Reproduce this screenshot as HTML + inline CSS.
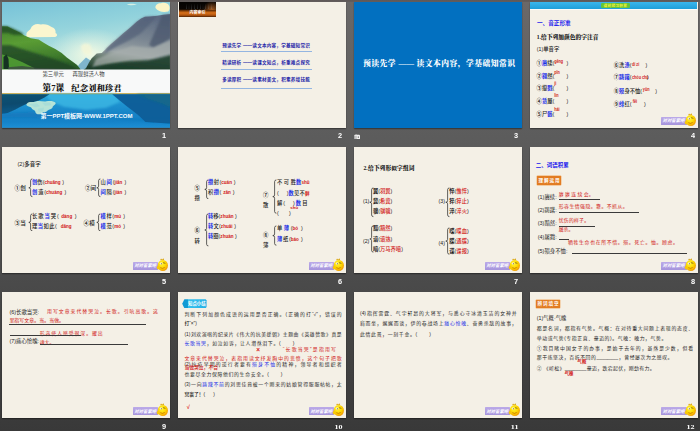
<!DOCTYPE html>
<html lang="zh-CN"><head><meta charset="utf-8"><title>纪念刘和珍君 PPT</title><style>
html,body{margin:0;padding:0;}
body{width:700px;height:431px;overflow:hidden;position:relative;background:linear-gradient(#5f5857 0,#625c5b 1.6px,#6a6868 2.4px,#5c5c5c 32%,#4a4a4a 66%,#393939 100%);font-family:"Liberation Sans","Noto Sans CJK SC",sans-serif;}
.r{position:absolute;}
.t{position:absolute;left:0;top:0;white-space:nowrap;font-family:"Liberation Sans","Noto Sans CJK SC",sans-serif;transform-origin:0 0;}
.t.b{font-weight:bold;}
.t.m{font-weight:500;}
.t.sf{font-family:"Liberation Serif","Noto Serif CJK SC",serif;font-weight:900;}
.t.it{font-style:italic;}
.num{position:absolute;width:400px;text-align:right;color:#fff;font-size:74px;line-height:90px;font-weight:bold;transform-origin:0 0;transform:scale(.1);}
.nb{font-family:"Liberation Sans","Noto Sans CJK SC",sans-serif;}
.ns{font-family:"Liberation Serif","Noto Serif CJK SC",serif;font-size:69px;transform:scale(.116,.1);}
.rd{color:#d01414;}
.bl{color:#1a2ee6;}
svg{position:absolute;overflow:hidden;}
</style></head><body>
<div class="num nb" style="left:126.20px;top:131.05px;">1</div>
<div class="r" style="left:178.0px;top:1.8px;width:168.0px;height:125.8px;background:#f4f0e6;box-shadow:0 0.6px 1.2px rgba(0,0,0,.45);"></div>
<div class="num nb" style="left:302.20px;top:131.05px;">2</div>
<div class="r" style="left:354.0px;top:1.8px;width:168.0px;height:125.8px;background:#0270c0;box-shadow:0 0.6px 1.2px rgba(0,0,0,.45);"></div>
<div class="num nb" style="left:478.20px;top:131.05px;">3</div>
<div class="r" style="left:530.3px;top:1.8px;width:168.0px;height:125.8px;background:#f4f0e6;box-shadow:0 0.6px 1.2px rgba(0,0,0,.45);"></div>
<div class="num nb" style="left:654.50px;top:131.05px;">4</div>
<div class="r" style="left:2.0px;top:147.0px;width:168.0px;height:125.8px;background:#f4f0e6;box-shadow:0 0.6px 1.2px rgba(0,0,0,.45);"></div>
<div class="num nb" style="left:126.20px;top:276.95px;">5</div>
<div class="r" style="left:178.0px;top:147.0px;width:168.0px;height:125.8px;background:#f4f0e6;box-shadow:0 0.6px 1.2px rgba(0,0,0,.45);"></div>
<div class="num nb" style="left:302.20px;top:276.95px;">6</div>
<div class="r" style="left:354.0px;top:147.0px;width:168.0px;height:125.8px;background:#f4f0e6;box-shadow:0 0.6px 1.2px rgba(0,0,0,.45);"></div>
<div class="num nb" style="left:478.20px;top:276.95px;">7</div>
<div class="r" style="left:530.3px;top:147.0px;width:168.0px;height:125.8px;background:#f4f0e6;box-shadow:0 0.6px 1.2px rgba(0,0,0,.45);"></div>
<div class="num nb" style="left:654.50px;top:276.95px;">8</div>
<div class="r" style="left:2.0px;top:291.9px;width:168.0px;height:126.3px;background:#f4f0e6;box-shadow:0 0.6px 1.2px rgba(0,0,0,.45);"></div>
<div class="num nb" style="left:126.20px;top:421.95px;">9</div>
<div class="r" style="left:178.0px;top:291.9px;width:168.0px;height:126.3px;background:#f4f0e6;box-shadow:0 0.6px 1.2px rgba(0,0,0,.45);"></div>
<div class="num ns" style="left:295.90px;top:422.30px;">10</div>
<div class="r" style="left:354.0px;top:291.9px;width:168.0px;height:126.3px;background:#f4f0e6;box-shadow:0 0.6px 1.2px rgba(0,0,0,.45);"></div>
<div class="num ns" style="left:471.90px;top:422.30px;">11</div>
<div class="r" style="left:530.3px;top:291.9px;width:168.0px;height:126.3px;background:#f4f0e6;box-shadow:0 0.6px 1.2px rgba(0,0,0,.45);"></div>
<div class="num ns" style="left:648.20px;top:422.30px;">12</div>
<svg style="left:2px;top:1.8px;box-shadow:0 0.6px 1.2px rgba(0,0,0,.45);" width="168" height="125.8" viewBox="0 0 168 126" preserveAspectRatio="none">
<defs>
<linearGradient id="sky" x1="0" y1="0" x2="0.35" y2="1"><stop offset="0" stop-color="#76c2d8"/><stop offset="0.45" stop-color="#93d3dc"/><stop offset="1" stop-color="#cdece2"/></linearGradient>
<radialGradient id="glow" cx="0.5" cy="0.5" r="0.5"><stop offset="0" stop-color="#f6fbe4" stop-opacity="0.95"/><stop offset="1" stop-color="#dff3e4" stop-opacity="0"/></radialGradient>
<linearGradient id="hillL" x1="0" y1="0" x2="0.25" y2="1"><stop offset="0" stop-color="#43802c"/><stop offset="0.4" stop-color="#5a9c34"/><stop offset="0.75" stop-color="#427f2d"/><stop offset="1" stop-color="#2e6029"/></linearGradient>
<linearGradient id="mtR" x1="0.6" y1="0" x2="0.35" y2="1"><stop offset="0" stop-color="#5c6a82"/><stop offset="0.4" stop-color="#7a8692"/><stop offset="0.68" stop-color="#9aa3a5"/><stop offset="0.85" stop-color="#4b6552"/><stop offset="1" stop-color="#23412f"/></linearGradient>
<linearGradient id="water" x1="0" y1="0" x2="0" y2="1"><stop offset="0" stop-color="#2aa6d8"/><stop offset="0.3" stop-color="#1e92cf"/><stop offset="0.62" stop-color="#1682c6"/><stop offset="0.82" stop-color="#1583c9"/><stop offset="1" stop-color="#1c8fd5"/></linearGradient>
<linearGradient id="wl2" x1="0" y1="0" x2="0.2" y2="1"><stop offset="0" stop-color="#0b5474"/><stop offset="0.5" stop-color="#0a4b6e"/><stop offset="1" stop-color="#0d5a8c"/></linearGradient>
<linearGradient id="wl" x1="0" y1="0" x2="0" y2="1"><stop offset="0" stop-color="#0a4358"/><stop offset="1" stop-color="#0f6a92" stop-opacity="0"/></linearGradient>
<filter id="b1" x="-10%" y="-10%" width="120%" height="120%"><feGaussianBlur stdDeviation="0.5"/></filter>
<filter id="b2" x="-20%" y="-20%" width="140%" height="140%"><feGaussianBlur stdDeviation="1.2"/></filter>
<filter id="b3" x="-30%" y="-30%" width="160%" height="160%"><feGaussianBlur stdDeviation="2.5"/></filter>
</defs>
<rect width="168" height="68" fill="url(#sky)"/>
<ellipse cx="88" cy="52" rx="42" ry="26" fill="url(#glow)"/>
<g filter="url(#b1)">
<path d="M24.5 33 C24 30 27 29 28.5 27 C30 22.5 35 21 39 22.5 C43 21.5 47 23 49.5 25 C53 26 54 29 53.5 31 C56 32.5 55.5 35 52 35 L28 35.2 C25 35.5 23.5 34.5 24.5 33Z" fill="#fbf6cf"/>
<path d="M153.5 6 C153 3 156 1 159 1.2 C162 0 166 1 167 3.5 C168 5 168 8 166 9.5 C162 10.5 156 10 153.5 6Z" fill="#fbf4c6"/>
<path d="M79 46 C78.5 43 82 41.2 84.8 41.8 C88 41.6 89.6 44 89 46.5 C91 49 89 53 85.4 52.6 C82 53 79.6 50 79 46Z" fill="#f4f6d8" opacity="0.85" filter="url(#b2)"/>
<path d="M125 2.5 C127 1.5 133 1.8 135 2.6 C131 3.6 127 3.4 125 2.5Z" fill="#eaf6e6" opacity="0.8"/>
</g>
<path d="M73 68 L77.5 62 L84 55.6 L88.5 58.6 L92 68Z" fill="#7fb5cd" filter="url(#b1)"/>
<g filter="url(#b1)">
<path d="M-1 24.4 L5.7 24.6 L10.9 27.2 L17.3 30.4 L22.4 33.6 L28.8 36.2 L36.6 37.5 L41.7 40.7 L46.8 43.9 L53.3 47.1 L59.7 51 L64.8 55.5 L70 59.3 L75.1 63.2 L77.7 66.4 L79 69 L-1 69Z" fill="url(#hillL)"/>
<path d="M-1 24 L4.7 24 L10.5 26.3 L19.7 30.5 L22 33 L12 33 L6 31 L-1 31Z" fill="#234d27" opacity="0.8" filter="url(#b2)"/>
<path d="M-1 43 L8 43 L20 47 L33 51 L46 55 L58 59 L70 64 L78 68 L78 69 L-1 69Z" fill="#1b4026" opacity="0.72" filter="url(#b2)"/>
<path d="M-1 52 L8 55 L20 60 L31 65.5 L35 69 L-1 69Z" fill="#4f9a33" opacity="0.95"/>
<path d="M1.5 55 L4.5 52.5 L6.5 57 L7 67 L1.5 67Z" fill="#143321"/>
<path d="M6 65.4 L20 64 L36 66 L60 66.8 L78 67.4 L78 69 L6 69Z" fill="#3a4a40" opacity="0.8"/>
</g>
<g filter="url(#b1)">
<path d="M80 69 L84 66.4 L87 60.5 L89.7 56.4 L94.7 51.6 L99.7 51 L104.7 46.4 L109 42 L114.7 37.2 L121 31.6 L128 25.8 L134.7 19.7 L139 16.6 L143 14.7 L148 14.4 L153 13.9 L159.7 13 L166.4 12.2 L169 12 L169 69Z" fill="url(#mtR)"/>
<path d="M160 13 L166.4 12.2 L169 12 L169 36 L161 41 L152 46 L147 43 L151 34 L155 25 L158 18Z" fill="#4a566c" opacity="0.72" filter="url(#b2)"/>
<path d="M104.7 46.4 L114.7 37.2 L128 26.4 L134.7 19.7 L143 14.7 L155 13.9 L148 22 L138 32 L126 39 L114 45 L102 52Z" fill="#526078" opacity="0.7" filter="url(#b2)"/>
<path d="M94 57 L112 49.5 L130 44 L150 46 L169 38 L169 52 L150 56.5 L128 58.5 L108 62 L90 66Z" fill="#a9b0ae" opacity="0.7" filter="url(#b2)"/>
<path d="M86 66 L104 62.5 L124 60 L146 58.5 L169 53 L169 69 L82 69Z" fill="#1e3d2c" opacity="0.9" filter="url(#b2)"/>
</g>
<rect y="67.6" width="168" height="24" fill="#f8f9f9"/>
<rect y="91.5" width="168" height="1.3" fill="#dcb838"/>
<rect y="92.6" width="168" height="33.4" fill="url(#water)"/>
<g filter="url(#b2)">
<path d="M44 92 L112 92 L118 100 L104 106 L84 108 L62 105 L48 99Z" fill="#3cb6e4" opacity="0.8"/>
<path d="M-2 112 L30 110 L60 114 L100 117 L140 119 L170 121 L170 117 L-2 116Z" fill="#0f72b6" opacity="0.45"/>
</g>
<g filter="url(#b1)">
<path d="M-1 92.4 L47.5 92.4 L42 96 L36.6 98.6 L30 100.6 L23.7 102.4 L18 105.2 L13.4 107.6 L9 109.8 L5.7 111.3 L-1 112.2Z" fill="url(#wl2)"/>
<path d="M110.2 92.4 L169 92.4 L169 121.8 L166.5 121.6 L143.4 120.3 L137 113.9 L131 109.2 L125.4 104.9 L118 99Z" fill="#0e5d98" opacity="0.96"/>
<path d="M134 92.4 L169 92.4 L169 106 L158 101.5 L146 97.5Z" fill="#156a86" opacity="0.75" filter="url(#b2)"/>
</g>
<g filter="url(#b1)">
<path d="M25 101.6 C27 99.3 31 100.6 34 99.6 C38 98.4 41 100.4 44.5 99.5 C48 98.6 52 99.2 53.6 101 C54.2 103 51 103.6 50.6 105.4 C50 107.6 47 107.2 45.6 108.8 C44 111 41 110 39.6 111.6 C37.6 113.2 33.6 112.6 33.4 110.2 C33.2 108 30.2 108.2 29.6 106.2 C29 104.6 26 105 24.8 103.6 C24.2 102.8 24.4 102.2 25 101.6Z" fill="#c6ecd8" opacity="0.9"/>
<path d="M27 102.5 L35 101.5 L38 104.5 L33 105.5Z M40 101 L48 100.6 L49 103.4 L43 104Z M36 107 L42 106 L41 109.5 L36.5 110Z" fill="#9ad8d8" opacity="0.55"/>
</g>
<text x="40.5" y="74.5" font-family='"Liberation Sans","Noto Sans CJK SC",sans-serif' font-size="5.35" fill="#3c3c3c">第三单元</text>
<text x="70.5" y="74.5" font-family='"Liberation Sans","Noto Sans CJK SC",sans-serif' font-size="5.35" fill="#3c3c3c">再现鲜活人物</text>
<text x="40.5" y="88.9" font-family='"Liberation Serif","Noto Serif CJK SC",serif' font-weight="900" font-size="8.7" fill="#151515">第7课</text>
<text x="69.3" y="88.9" font-family='"Liberation Serif","Noto Serif CJK SC",serif' font-weight="900" font-size="8.4" fill="#151515">纪念刘和珍君</text>
<text x="38.4" y="115.9" font-family='"Liberation Sans","Noto Sans CJK SC",sans-serif' font-weight="bold" font-size="5.6" fill="#f4fbff" textLength="92" lengthAdjust="spacingAndGlyphs">第一PPT模板网-WWW.1PPT.COM</text>
</svg>
<div class="r" style="left:179.0px;top:2.2px;width:37.0px;height:14.4px;background:linear-gradient(#050302 0%,#0a0603 48%,#7a3a08 58%,#d9711a 72%,#b3560f 88%,#4d2206 100%);"></div>
<div class="r" style="left:203.0px;top:2.2px;width:13.0px;height:8.0px;background:radial-gradient(circle at 70% 100%,rgba(200,110,40,.8),rgba(0,0,0,0) 75%);"></div>
<div class="r" style="left:183.5px;top:4.2px;width:28.0px;height:5.2px;background:repeating-linear-gradient(90deg,rgba(190,200,210,.0) 0,rgba(190,200,210,.0) 1.6px,rgba(170,185,200,.2) 1.9px,rgba(170,185,200,.2) 2.5px,rgba(0,0,0,0) 2.8px);-webkit-mask-image:linear-gradient(rgba(0,0,0,.15),#000);mask-image:linear-gradient(rgba(0,0,0,.15),#000);"></div>
<div class="t b" style="font-size:40.5px;line-height:48.6px;color:#fff;transform:translate(189.40px,10.20px) scale(0.1000,.1);">内容索引</div>
<div class="t b" style="font-size:46.0px;line-height:55.2px;color:#1e1ea8;transform:translate(222.20px,42.68px) scale(0.1000,.1);width:876px;text-align:justify;text-align-last:justify;">预读先学 ——读文本内容，学基础知常识</div>
<div class="r" style="left:221.3px;top:50.7px;width:91.0px;height:1.0px;background:linear-gradient(#7fa7dc,#a9c4e6);"></div>
<div class="t b" style="font-size:46.0px;line-height:55.2px;color:#1e1ea8;transform:translate(222.20px,59.68px) scale(0.1000,.1);width:876px;text-align:justify;text-align-last:justify;">精读研析 ——读课文知点，析重难点探究</div>
<div class="r" style="left:221.3px;top:68.7px;width:91.0px;height:1.0px;background:linear-gradient(#7fa7dc,#a9c4e6);"></div>
<div class="t b" style="font-size:46.0px;line-height:55.2px;color:#1e1ea8;transform:translate(222.20px,76.68px) scale(0.1000,.1);width:876px;text-align:justify;text-align-last:justify;">多读厚积 ——读素材美文，积素养增技能</div>
<div class="r" style="left:221.3px;top:87.7px;width:91.0px;height:1.0px;background:linear-gradient(#7fa7dc,#a9c4e6);"></div>
<div class="t sf" style="font-size:78.0px;line-height:93.6px;color:#fff;transform:translate(363.00px,58.72px) scale(0.1000,.1);width:1520px;text-align:justify;text-align-last:justify;">预读先学 —— 读文本内容，学基础知常识</div>
<svg style="left:353.7px;top:133.6px" width="6.6" height="5.7" viewBox="0 0 7 6" preserveAspectRatio="none"><g fill="#f2f2f2"><rect x="0.5" y="0.9" width="1.3" height="4.5" rx="0.3"/><path d="M2.4 0.7 L5.6 0.7 L6.4 1.6 L6.4 5.5 L2.4 5.5Z M4 2.6 L4 4 L5.2 4 L5.2 2.6Z" fill-rule="evenodd"/><rect x="1.2" y="0.7" width="2" height="1.1"/></g></svg>
<div class="r" style="left:661.1px;top:116.6px;width:25.6px;height:8.0px;background:linear-gradient(#bbaae8,#a694dc);border-radius:0.6px;"></div>
<div class="t b it" style="font-size:44.0px;line-height:52.8px;color:#fff;transform:translate(662.50px,117.87px) scale(0.1000,.1);">对对答案吧</div>
<svg style="left:683.2px;top:111.7px" width="14.6" height="15.6" viewBox="0 0 16 17"><defs><radialGradient id="sm3" cx="0.4" cy="0.35" r="0.75"><stop offset="0" stop-color="#fff23a"/><stop offset="0.5" stop-color="#fdd800"/><stop offset="0.85" stop-color="#f2a006"/><stop offset="1" stop-color="#e88408"/></radialGradient></defs><path d="M5.6 3.4 L6.6 1.6 L7.8 2.9 L9.2 1.3 L10 3.2Z" fill="#d9a406"/><ellipse cx="8.6" cy="9.3" rx="5.6" ry="6.1" fill="url(#sm3)"/><ellipse cx="3.6" cy="11.6" rx="1.6" ry="2.1" fill="#f7c80a"/><ellipse cx="6.6" cy="7.2" rx="1.5" ry="1.1" fill="#fffbe8"/><circle cx="6.9" cy="7.3" r="0.55" fill="#3a2a10"/><path d="M8.8 6.2 L11.4 6.9" stroke="#5a3c08" stroke-width="0.7"/><path d="M5.8 11.6 Q8.2 13.4 10.6 11.4" stroke="#b35a06" stroke-width="0.7" fill="none"/></svg>
<div class="r" style="left:132.8px;top:261.8px;width:25.6px;height:8.0px;background:linear-gradient(#bbaae8,#a694dc);border-radius:0.6px;"></div>
<div class="t b it" style="font-size:44.0px;line-height:52.8px;color:#fff;transform:translate(134.20px,262.87px) scale(0.1000,.1);">对对答案吧</div>
<svg style="left:154.9px;top:256.9px" width="14.6" height="15.6" viewBox="0 0 16 17"><defs><radialGradient id="sm4" cx="0.4" cy="0.35" r="0.75"><stop offset="0" stop-color="#fff23a"/><stop offset="0.5" stop-color="#fdd800"/><stop offset="0.85" stop-color="#f2a006"/><stop offset="1" stop-color="#e88408"/></radialGradient></defs><path d="M5.6 3.4 L6.6 1.6 L7.8 2.9 L9.2 1.3 L10 3.2Z" fill="#d9a406"/><ellipse cx="8.6" cy="9.3" rx="5.6" ry="6.1" fill="url(#sm4)"/><ellipse cx="3.6" cy="11.6" rx="1.6" ry="2.1" fill="#f7c80a"/><ellipse cx="6.6" cy="7.2" rx="1.5" ry="1.1" fill="#fffbe8"/><circle cx="6.9" cy="7.3" r="0.55" fill="#3a2a10"/><path d="M8.8 6.2 L11.4 6.9" stroke="#5a3c08" stroke-width="0.7"/><path d="M5.8 11.6 Q8.2 13.4 10.6 11.4" stroke="#b35a06" stroke-width="0.7" fill="none"/></svg>
<div class="r" style="left:308.8px;top:261.8px;width:25.6px;height:8.0px;background:linear-gradient(#bbaae8,#a694dc);border-radius:0.6px;"></div>
<div class="t b it" style="font-size:44.0px;line-height:52.8px;color:#fff;transform:translate(310.20px,262.87px) scale(0.1000,.1);">对对答案吧</div>
<svg style="left:330.9px;top:256.9px" width="14.6" height="15.6" viewBox="0 0 16 17"><defs><radialGradient id="sm5" cx="0.4" cy="0.35" r="0.75"><stop offset="0" stop-color="#fff23a"/><stop offset="0.5" stop-color="#fdd800"/><stop offset="0.85" stop-color="#f2a006"/><stop offset="1" stop-color="#e88408"/></radialGradient></defs><path d="M5.6 3.4 L6.6 1.6 L7.8 2.9 L9.2 1.3 L10 3.2Z" fill="#d9a406"/><ellipse cx="8.6" cy="9.3" rx="5.6" ry="6.1" fill="url(#sm5)"/><ellipse cx="3.6" cy="11.6" rx="1.6" ry="2.1" fill="#f7c80a"/><ellipse cx="6.6" cy="7.2" rx="1.5" ry="1.1" fill="#fffbe8"/><circle cx="6.9" cy="7.3" r="0.55" fill="#3a2a10"/><path d="M8.8 6.2 L11.4 6.9" stroke="#5a3c08" stroke-width="0.7"/><path d="M5.8 11.6 Q8.2 13.4 10.6 11.4" stroke="#b35a06" stroke-width="0.7" fill="none"/></svg>
<div class="r" style="left:484.8px;top:261.8px;width:25.6px;height:8.0px;background:linear-gradient(#bbaae8,#a694dc);border-radius:0.6px;"></div>
<div class="t b it" style="font-size:44.0px;line-height:52.8px;color:#fff;transform:translate(486.20px,262.87px) scale(0.1000,.1);">对对答案吧</div>
<svg style="left:506.9px;top:256.9px" width="14.6" height="15.6" viewBox="0 0 16 17"><defs><radialGradient id="sm6" cx="0.4" cy="0.35" r="0.75"><stop offset="0" stop-color="#fff23a"/><stop offset="0.5" stop-color="#fdd800"/><stop offset="0.85" stop-color="#f2a006"/><stop offset="1" stop-color="#e88408"/></radialGradient></defs><path d="M5.6 3.4 L6.6 1.6 L7.8 2.9 L9.2 1.3 L10 3.2Z" fill="#d9a406"/><ellipse cx="8.6" cy="9.3" rx="5.6" ry="6.1" fill="url(#sm6)"/><ellipse cx="3.6" cy="11.6" rx="1.6" ry="2.1" fill="#f7c80a"/><ellipse cx="6.6" cy="7.2" rx="1.5" ry="1.1" fill="#fffbe8"/><circle cx="6.9" cy="7.3" r="0.55" fill="#3a2a10"/><path d="M8.8 6.2 L11.4 6.9" stroke="#5a3c08" stroke-width="0.7"/><path d="M5.8 11.6 Q8.2 13.4 10.6 11.4" stroke="#b35a06" stroke-width="0.7" fill="none"/></svg>
<div class="r" style="left:661.1px;top:261.8px;width:25.6px;height:8.0px;background:linear-gradient(#bbaae8,#a694dc);border-radius:0.6px;"></div>
<div class="t b it" style="font-size:44.0px;line-height:52.8px;color:#fff;transform:translate(662.50px,262.87px) scale(0.1000,.1);">对对答案吧</div>
<svg style="left:683.2px;top:256.9px" width="14.6" height="15.6" viewBox="0 0 16 17"><defs><radialGradient id="sm7" cx="0.4" cy="0.35" r="0.75"><stop offset="0" stop-color="#fff23a"/><stop offset="0.5" stop-color="#fdd800"/><stop offset="0.85" stop-color="#f2a006"/><stop offset="1" stop-color="#e88408"/></radialGradient></defs><path d="M5.6 3.4 L6.6 1.6 L7.8 2.9 L9.2 1.3 L10 3.2Z" fill="#d9a406"/><ellipse cx="8.6" cy="9.3" rx="5.6" ry="6.1" fill="url(#sm7)"/><ellipse cx="3.6" cy="11.6" rx="1.6" ry="2.1" fill="#f7c80a"/><ellipse cx="6.6" cy="7.2" rx="1.5" ry="1.1" fill="#fffbe8"/><circle cx="6.9" cy="7.3" r="0.55" fill="#3a2a10"/><path d="M8.8 6.2 L11.4 6.9" stroke="#5a3c08" stroke-width="0.7"/><path d="M5.8 11.6 Q8.2 13.4 10.6 11.4" stroke="#b35a06" stroke-width="0.7" fill="none"/></svg>
<div class="r" style="left:132.8px;top:407.3px;width:25.6px;height:8.0px;background:linear-gradient(#bbaae8,#a694dc);border-radius:0.6px;"></div>
<div class="t b it" style="font-size:44.0px;line-height:52.8px;color:#fff;transform:translate(134.20px,408.87px) scale(0.1000,.1);">对对答案吧</div>
<svg style="left:154.9px;top:402.4px" width="14.6" height="15.6" viewBox="0 0 16 17"><defs><radialGradient id="sm8" cx="0.4" cy="0.35" r="0.75"><stop offset="0" stop-color="#fff23a"/><stop offset="0.5" stop-color="#fdd800"/><stop offset="0.85" stop-color="#f2a006"/><stop offset="1" stop-color="#e88408"/></radialGradient></defs><path d="M5.6 3.4 L6.6 1.6 L7.8 2.9 L9.2 1.3 L10 3.2Z" fill="#d9a406"/><ellipse cx="8.6" cy="9.3" rx="5.6" ry="6.1" fill="url(#sm8)"/><ellipse cx="3.6" cy="11.6" rx="1.6" ry="2.1" fill="#f7c80a"/><ellipse cx="6.6" cy="7.2" rx="1.5" ry="1.1" fill="#fffbe8"/><circle cx="6.9" cy="7.3" r="0.55" fill="#3a2a10"/><path d="M8.8 6.2 L11.4 6.9" stroke="#5a3c08" stroke-width="0.7"/><path d="M5.8 11.6 Q8.2 13.4 10.6 11.4" stroke="#b35a06" stroke-width="0.7" fill="none"/></svg>
<div class="r" style="left:308.8px;top:407.3px;width:25.6px;height:8.0px;background:linear-gradient(#bbaae8,#a694dc);border-radius:0.6px;"></div>
<div class="t b it" style="font-size:44.0px;line-height:52.8px;color:#fff;transform:translate(310.20px,408.87px) scale(0.1000,.1);">对对答案吧</div>
<svg style="left:330.9px;top:402.4px" width="14.6" height="15.6" viewBox="0 0 16 17"><defs><radialGradient id="sm9" cx="0.4" cy="0.35" r="0.75"><stop offset="0" stop-color="#fff23a"/><stop offset="0.5" stop-color="#fdd800"/><stop offset="0.85" stop-color="#f2a006"/><stop offset="1" stop-color="#e88408"/></radialGradient></defs><path d="M5.6 3.4 L6.6 1.6 L7.8 2.9 L9.2 1.3 L10 3.2Z" fill="#d9a406"/><ellipse cx="8.6" cy="9.3" rx="5.6" ry="6.1" fill="url(#sm9)"/><ellipse cx="3.6" cy="11.6" rx="1.6" ry="2.1" fill="#f7c80a"/><ellipse cx="6.6" cy="7.2" rx="1.5" ry="1.1" fill="#fffbe8"/><circle cx="6.9" cy="7.3" r="0.55" fill="#3a2a10"/><path d="M8.8 6.2 L11.4 6.9" stroke="#5a3c08" stroke-width="0.7"/><path d="M5.8 11.6 Q8.2 13.4 10.6 11.4" stroke="#b35a06" stroke-width="0.7" fill="none"/></svg>
<div class="r" style="left:484.8px;top:407.3px;width:25.6px;height:8.0px;background:linear-gradient(#bbaae8,#a694dc);border-radius:0.6px;"></div>
<div class="t b it" style="font-size:44.0px;line-height:52.8px;color:#fff;transform:translate(486.20px,408.87px) scale(0.1000,.1);">对对答案吧</div>
<svg style="left:506.9px;top:402.4px" width="14.6" height="15.6" viewBox="0 0 16 17"><defs><radialGradient id="sm10" cx="0.4" cy="0.35" r="0.75"><stop offset="0" stop-color="#fff23a"/><stop offset="0.5" stop-color="#fdd800"/><stop offset="0.85" stop-color="#f2a006"/><stop offset="1" stop-color="#e88408"/></radialGradient></defs><path d="M5.6 3.4 L6.6 1.6 L7.8 2.9 L9.2 1.3 L10 3.2Z" fill="#d9a406"/><ellipse cx="8.6" cy="9.3" rx="5.6" ry="6.1" fill="url(#sm10)"/><ellipse cx="3.6" cy="11.6" rx="1.6" ry="2.1" fill="#f7c80a"/><ellipse cx="6.6" cy="7.2" rx="1.5" ry="1.1" fill="#fffbe8"/><circle cx="6.9" cy="7.3" r="0.55" fill="#3a2a10"/><path d="M8.8 6.2 L11.4 6.9" stroke="#5a3c08" stroke-width="0.7"/><path d="M5.8 11.6 Q8.2 13.4 10.6 11.4" stroke="#b35a06" stroke-width="0.7" fill="none"/></svg>
<div class="r" style="left:661.1px;top:407.3px;width:25.6px;height:8.0px;background:linear-gradient(#bbaae8,#a694dc);border-radius:0.6px;"></div>
<div class="t b it" style="font-size:44.0px;line-height:52.8px;color:#fff;transform:translate(662.50px,408.87px) scale(0.1000,.1);">对对答案吧</div>
<svg style="left:683.2px;top:402.4px" width="14.6" height="15.6" viewBox="0 0 16 17"><defs><radialGradient id="sm11" cx="0.4" cy="0.35" r="0.75"><stop offset="0" stop-color="#fff23a"/><stop offset="0.5" stop-color="#fdd800"/><stop offset="0.85" stop-color="#f2a006"/><stop offset="1" stop-color="#e88408"/></radialGradient></defs><path d="M5.6 3.4 L6.6 1.6 L7.8 2.9 L9.2 1.3 L10 3.2Z" fill="#d9a406"/><ellipse cx="8.6" cy="9.3" rx="5.6" ry="6.1" fill="url(#sm11)"/><ellipse cx="3.6" cy="11.6" rx="1.6" ry="2.1" fill="#f7c80a"/><ellipse cx="6.6" cy="7.2" rx="1.5" ry="1.1" fill="#fffbe8"/><circle cx="6.9" cy="7.3" r="0.55" fill="#3a2a10"/><path d="M8.8 6.2 L11.4 6.9" stroke="#5a3c08" stroke-width="0.7"/><path d="M5.8 11.6 Q8.2 13.4 10.6 11.4" stroke="#b35a06" stroke-width="0.7" fill="none"/></svg>
<div class="r" style="left:530.0px;top:2.0px;width:167.0px;height:7.1px;background:linear-gradient(#3bb6ec,#1f9fd9);"></div>
<div class="r" style="left:530.0px;top:9.1px;width:167.0px;height:1.0px;background:rgba(255,255,255,.7);"></div>
<div class="r" style="left:600.5px;top:2.6px;width:29.5px;height:5.6px;background:#62c53c;border-radius:1.2px;"></div>
<div class="t b" style="font-size:37.0px;line-height:44.4px;color:#f4f03a;transform:translate(603.60px,3.53px) scale(0.1000,.1);width:234px;text-align:justify;text-align-last:justify;">课前预习积累</div>
<div class="t b" style="font-size:56.0px;line-height:67.2px;color:#1414ee;transform:translate(537.00px,19.73px) scale(0.1000,.1);">一、音正形准</div>
<div class="t sf" style="font-size:57.0px;line-height:68.4px;color:#111;transform:translate(536.80px,33.69px) scale(0.1000,.1);width:616px;text-align:justify;text-align-last:justify;">1.给下列加颜色的字注音</div>
<div class="t m" style="font-size:53.0px;line-height:63.6px;color:#1a1a1a;transform:translate(536.80px,46.01px) scale(0.1000,.1);">(1)单音字</div>
<div class="t m" style="font-size:53.0px;line-height:63.6px;color:#1a1a1a;transform:translate(536.60px,60.01px) scale(0.1000,.1);"><b>①</b><span class="bl" style="font-weight:bold">赓</span>续(</div>
<div class="t b" style="font-size:52.0px;line-height:62.4px;color:#d01818;transform:translate(554.20px,58.11px) scale(0.0720,.1);">gēng</div>
<div class="t m" style="font-size:53.0px;line-height:63.6px;color:#1a1a1a;transform:translate(566.40px,60.01px) scale(0.1000,.1);">)</div>
<div class="t m" style="font-size:53.0px;line-height:63.6px;color:#1a1a1a;transform:translate(536.60px,73.01px) scale(0.1000,.1);"><b>②</b><span class="bl" style="font-weight:bold">翱</span>然(</div>
<div class="t b" style="font-size:52.0px;line-height:62.4px;color:#d01818;transform:translate(554.20px,69.11px) scale(0.0720,.1);">pīn</div>
<div class="t m" style="font-size:53.0px;line-height:63.6px;color:#1a1a1a;transform:translate(566.40px,73.01px) scale(0.1000,.1);">)</div>
<div class="t m" style="font-size:53.0px;line-height:63.6px;color:#1a1a1a;transform:translate(536.60px,85.01px) scale(0.1000,.1);"><b>③</b>攥<span class="bl" style="font-weight:bold">戮</span>(</div>
<div class="t b" style="font-size:52.0px;line-height:62.4px;color:#d01818;transform:translate(554.20px,80.11px) scale(0.0720,.1);">jì</div>
<div class="t m" style="font-size:53.0px;line-height:63.6px;color:#1a1a1a;transform:translate(566.40px,85.01px) scale(0.1000,.1);">)</div>
<div class="t m" style="font-size:53.0px;line-height:63.6px;color:#1a1a1a;transform:translate(536.60px,98.01px) scale(0.1000,.1);"><b>④</b><span class="bl" style="font-weight:bold">赁</span>屋(</div>
<div class="t b" style="font-size:52.0px;line-height:62.4px;color:#d01818;transform:translate(554.20px,92.11px) scale(0.0720,.1);">lìn</div>
<div class="t m" style="font-size:53.0px;line-height:63.6px;color:#1a1a1a;transform:translate(566.40px,98.01px) scale(0.1000,.1);">)</div>
<div class="t m" style="font-size:53.0px;line-height:63.6px;color:#1a1a1a;transform:translate(536.60px,111.01px) scale(0.1000,.1);"><b>⑤</b>尸<span class="bl" style="font-weight:bold">骸</span>(</div>
<div class="t b" style="font-size:52.0px;line-height:62.4px;color:#d01818;transform:translate(554.20px,106.11px) scale(0.0720,.1);">hái</div>
<div class="t m" style="font-size:53.0px;line-height:63.6px;color:#1a1a1a;transform:translate(566.40px,111.01px) scale(0.1000,.1);">)</div>
<div class="t m" style="font-size:53.0px;line-height:63.6px;color:#1a1a1a;transform:translate(613.80px,62.01px) scale(0.1000,.1);"><b>⑥</b>洗<span class="bl" style="font-weight:bold">涤</span>(</div>
<div class="t b" style="font-size:52.0px;line-height:62.4px;color:#d01818;transform:translate(632.00px,61.11px) scale(0.0720,.1);">dí&nbsp;zi</div>
<div class="t m" style="font-size:53.0px;line-height:63.6px;color:#1a1a1a;transform:translate(645.60px,62.01px) scale(0.1000,.1);">)</div>
<div class="t m" style="font-size:53.0px;line-height:63.6px;color:#1a1a1a;transform:translate(613.80px,74.01px) scale(0.1000,.1);"><b>⑦</b><span class="bl" style="font-weight:bold">踌躇</span>(</div>
<div class="t b" style="font-size:52.0px;line-height:62.4px;color:#d01818;transform:translate(632.00px,74.11px) scale(0.0720,.1);width:175px;text-align:justify;text-align-last:justify;">chóu chú</div>
<div class="t m" style="font-size:53.0px;line-height:63.6px;color:#1a1a1a;transform:translate(646.80px,74.01px) scale(0.1000,.1);">)</div>
<div class="t m" style="font-size:53.0px;line-height:63.6px;color:#1a1a1a;transform:translate(613.80px,88.01px) scale(0.1000,.1);"><b>⑧</b><span class="bl" style="font-weight:bold">殒</span>身不恤(</div>
<div class="t b" style="font-size:52.0px;line-height:62.4px;color:#d01818;transform:translate(642.80px,86.11px) scale(0.0720,.1);">yǔn</div>
<div class="t m" style="font-size:53.0px;line-height:63.6px;color:#1a1a1a;transform:translate(655.20px,88.01px) scale(0.1000,.1);">)</div>
<div class="t m" style="font-size:53.0px;line-height:63.6px;color:#1a1a1a;transform:translate(613.80px,101.01px) scale(0.1000,.1);"><b>⑨</b><span class="bl" style="font-weight:bold">绯</span>红(</div>
<div class="t b" style="font-size:52.0px;line-height:62.4px;color:#d01818;transform:translate(632.70px,98.11px) scale(0.0720,.1);">fēi</div>
<div class="t m" style="font-size:53.0px;line-height:63.6px;color:#1a1a1a;transform:translate(643.90px,101.01px) scale(0.1000,.1);">)</div>
<div class="t m" style="font-size:55.0px;line-height:66.0px;color:#1a1a1a;transform:translate(17.50px,160.82px) scale(0.1000,.1);">(2)多音字</div>
<div class="t m" style="font-size:56.0px;line-height:67.2px;color:#1a1a1a;transform:translate(14.60px,184.73px) scale(0.1000,.1);"><b>①</b>创</div>
<svg style="left:27.8px;top:178.4px" width="5" height="19.6" viewBox="0 0 5 19.6"><path d="M4.4 1 Q2.6 1 2.6 2.6 L2.6 8.2 Q2.6 9.8 0.8 9.8 Q2.6 9.8 2.6 11.4 L2.6 17.0 Q2.6 18.6 4.4 18.6" fill="none" stroke="#222" stroke-width="0.7"/></svg>
<div class="t m" style="font-size:53.0px;line-height:63.6px;color:#1a1a1a;transform:translate(32.00px,179.01px) scale(0.1000,.1);width:319px;text-align:justify;text-align-last:justify;"><span class="bl" style="font-weight:bold">创</span>伤(<span class="rd" style="font-weight:bold;font-size:.86em">chuāng</span>&nbsp;)</div>
<div class="t m" style="font-size:53.0px;line-height:63.6px;color:#1a1a1a;transform:translate(32.00px,189.01px) scale(0.1000,.1);width:343px;text-align:justify;text-align-last:justify;"><span class="bl" style="font-weight:bold">创</span>造(<span class="rd" style="font-weight:bold;font-size:.86em">chuàng</span>&nbsp;)</div>
<div class="t m" style="font-size:56.0px;line-height:67.2px;color:#1a1a1a;transform:translate(85.00px,184.73px) scale(0.1000,.1);"><b>②</b>间</div>
<svg style="left:96.2px;top:178.4px" width="5" height="19.6" viewBox="0 0 5 19.6"><path d="M4.4 1 Q2.6 1 2.6 2.6 L2.6 8.2 Q2.6 9.8 0.8 9.8 Q2.6 9.8 2.6 11.4 L2.6 17.0 Q2.6 18.6 4.4 18.6" fill="none" stroke="#222" stroke-width="0.7"/></svg>
<div class="t m" style="font-size:53.0px;line-height:63.6px;color:#1a1a1a;transform:translate(100.40px,179.01px) scale(0.1000,.1);width:259px;text-align:justify;text-align-last:justify;">山<span class="bl" style="font-weight:bold">间</span>(<span class="rd" style="font-weight:bold;font-size:.86em">jiān</span>&nbsp;)</div>
<div class="t m" style="font-size:53.0px;line-height:63.6px;color:#1a1a1a;transform:translate(100.40px,189.01px) scale(0.1000,.1);width:259px;text-align:justify;text-align-last:justify;"><span class="bl" style="font-weight:bold">间</span>隔(<span class="rd" style="font-weight:bold;font-size:.86em">jiàn</span>&nbsp;)</div>
<div class="t m" style="font-size:56.0px;line-height:67.2px;color:#1a1a1a;transform:translate(14.60px,219.73px) scale(0.1000,.1);"><b>③</b>当</div>
<svg style="left:27.8px;top:212.6px" width="5" height="18.8" viewBox="0 0 5 18.8"><path d="M4.4 1 Q2.6 1 2.6 2.6 L2.6 7.8 Q2.6 9.4 0.8 9.4 Q2.6 9.4 2.6 11.0 L2.6 16.2 Q2.6 17.8 4.4 17.8" fill="none" stroke="#222" stroke-width="0.7"/></svg>
<div class="t m" style="font-size:53.0px;line-height:63.6px;color:#1a1a1a;transform:translate(32.00px,213.01px) scale(0.1000,.1);width:444px;text-align:justify;text-align-last:justify;">长歌<span class="bl" style="font-weight:bold">当</span>哭( <span class="rd" style="font-weight:bold;font-size:.86em">dàng</span> )</div>
<div class="t m" style="font-size:53.0px;line-height:63.6px;color:#1a1a1a;transform:translate(32.00px,223.01px) scale(0.1000,.1);width:396px;text-align:justify;text-align-last:justify;">理<span class="bl" style="font-weight:bold">当</span>如此( &nbsp;<span class="rd" style="font-weight:bold;font-size:.86em">dāng</span></div>
<div class="t m" style="font-size:56.0px;line-height:67.2px;color:#1a1a1a;transform:translate(83.60px,219.73px) scale(0.1000,.1);"><b>④</b>模</div>
<svg style="left:96.2px;top:212.6px" width="5" height="18.8" viewBox="0 0 5 18.8"><path d="M4.4 1 Q2.6 1 2.6 2.6 L2.6 7.8 Q2.6 9.4 0.8 9.4 Q2.6 9.4 2.6 11.0 L2.6 16.2 Q2.6 17.8 4.4 17.8" fill="none" stroke="#222" stroke-width="0.7"/></svg>
<div class="t m" style="font-size:53.0px;line-height:63.6px;color:#1a1a1a;transform:translate(100.40px,213.01px) scale(0.1000,.1);width:245px;text-align:justify;text-align-last:justify;"><span class="bl" style="font-weight:bold">模</span>样(<span class="rd" style="font-weight:bold;font-size:.86em">mú</span>&nbsp;)</div>
<div class="t m" style="font-size:53.0px;line-height:63.6px;color:#1a1a1a;transform:translate(100.40px,223.01px) scale(0.1000,.1);width:245px;text-align:justify;text-align-last:justify;"><span class="bl" style="font-weight:bold">模</span>范(<span class="rd" style="font-weight:bold;font-size:.86em">mó</span>&nbsp;)</div>
<div class="t m" style="font-size:54.0px;line-height:64.8px;color:#1a1a1a;transform:translate(194.50px,184.92px) scale(0.1000,.1);"><b>⑤</b></div>
<div class="t m" style="font-size:54.0px;line-height:64.8px;color:#1a1a1a;transform:translate(194.50px,194.92px) scale(0.1000,.1);">攒</div>
<svg style="left:204.2px;top:178.6px" width="5" height="20.7" viewBox="0 0 5 20.7"><path d="M4.4 1 Q2.6 1 2.6 2.6 L2.6 8.8 Q2.6 10.4 0.8 10.4 Q2.6 10.4 2.6 12.0 L2.6 18.1 Q2.6 19.7 4.4 19.7" fill="none" stroke="#222" stroke-width="0.7"/></svg>
<div class="t m" style="font-size:53.0px;line-height:63.6px;color:#1a1a1a;transform:translate(208.00px,179.01px) scale(0.1000,.1);width:276px;text-align:justify;text-align-last:justify;"><span class="bl" style="font-weight:bold">攒</span>射(<span class="rd" style="font-weight:bold;font-size:.86em">cuán</span>&nbsp;)</div>
<div class="t m" style="font-size:53.0px;line-height:63.6px;color:#1a1a1a;transform:translate(208.00px,189.01px) scale(0.1000,.1);width:264px;text-align:justify;text-align-last:justify;">积<span class="bl" style="font-weight:bold">攒</span>( <span class="rd" style="font-weight:bold;font-size:.86em">zǎn</span> )</div>
<div class="t m" style="font-size:54.0px;line-height:64.8px;color:#1a1a1a;transform:translate(194.50px,226.92px) scale(0.1000,.1);"><b>⑥</b></div>
<div class="t m" style="font-size:54.0px;line-height:64.8px;color:#1a1a1a;transform:translate(194.50px,237.92px) scale(0.1000,.1);">转</div>
<svg style="left:204.2px;top:212.7px" width="5" height="33.9" viewBox="0 0 5 33.9"><path d="M4.4 1 Q2.6 1 2.6 2.6 L2.6 15.4 Q2.6 17.0 0.8 17.0 Q2.6 17.0 2.6 18.6 L2.6 31.3 Q2.6 32.9 4.4 32.9" fill="none" stroke="#222" stroke-width="0.7"/></svg>
<div class="t m" style="font-size:53.0px;line-height:63.6px;color:#1a1a1a;transform:translate(208.00px,213.01px) scale(0.1000,.1);width:280px;text-align:justify;text-align-last:justify;"><span class="bl" style="font-weight:bold">转</span>移(<span class="rd" style="font-weight:bold;font-size:.86em">zhuǎn</span> )</div>
<div class="t m" style="font-size:53.0px;line-height:63.6px;color:#1a1a1a;transform:translate(208.00px,223.01px) scale(0.1000,.1);width:280px;text-align:justify;text-align-last:justify;"><span class="bl" style="font-weight:bold">转</span>文(<span class="rd" style="font-weight:bold;font-size:.86em">zhuǎi</span> )</div>
<div class="t m" style="font-size:53.0px;line-height:63.6px;color:#1a1a1a;transform:translate(208.00px,233.01px) scale(0.1000,.1);width:280px;text-align:justify;text-align-last:justify;"><span class="bl" style="font-weight:bold">转</span>圈(<span class="rd" style="font-weight:bold;font-size:.86em">zhuàn</span> )</div>
<div class="t m" style="font-size:54.0px;line-height:64.8px;color:#1a1a1a;transform:translate(262.90px,191.92px) scale(0.1000,.1);"><b>⑦</b></div>
<div class="t m" style="font-size:54.0px;line-height:64.8px;color:#1a1a1a;transform:translate(262.90px,201.92px) scale(0.1000,.1);">散</div>
<svg style="left:272.2px;top:179.0px" width="5" height="35.2" viewBox="0 0 5 35.2"><path d="M4.4 1 Q2.6 1 2.6 2.6 L2.6 16.0 Q2.6 17.6 0.8 17.6 Q2.6 17.6 2.6 19.2 L2.6 32.6 Q2.6 34.2 4.4 34.2" fill="none" stroke="#222" stroke-width="0.7"/></svg>
<div class="t m" style="font-size:53.0px;line-height:63.6px;color:#1a1a1a;transform:translate(276.90px,179.01px) scale(0.1000,.1);width:326px;text-align:justify;text-align-last:justify;">不 可 胜<span class="bl" style="font-weight:bold">数</span><span class="rd" style="font-weight:bold;font-size:.86em">shǔ</span></div>
<div class="t m" style="font-size:53.0px;line-height:63.6px;color:#1a1a1a;transform:translate(276.90px,190.01px) scale(0.1000,.1);width:326px;text-align:justify;text-align-last:justify;">(&nbsp;&nbsp;&nbsp;&nbsp; )<span class="bl" style="font-weight:bold">数</span>见不<span class="rd" style="font-weight:bold;font-size:.86em">鲜</span></div>
<div class="t m" style="font-size:53.0px;line-height:63.6px;color:#1a1a1a;transform:translate(276.90px,200.01px) scale(0.1000,.1);width:307px;text-align:justify;text-align-last:justify;">解(&nbsp;&nbsp; )<span class="bl" style="font-weight:bold">数</span>目</div>
<div class="t b" style="font-size:44.0px;line-height:52.8px;color:#d01818;transform:translate(290.30px,204.87px) scale(0.1000,.1);">shù</div>
<div class="t m" style="font-size:53.0px;line-height:63.6px;color:#1a1a1a;transform:translate(276.90px,210.01px) scale(0.1000,.1);width:139px;text-align:justify;text-align-last:justify;">(&nbsp;&nbsp;&nbsp; )</div>
<div class="t m" style="font-size:54.0px;line-height:64.8px;color:#1a1a1a;transform:translate(262.90px,231.92px) scale(0.1000,.1);"><b>⑧</b></div>
<div class="t m" style="font-size:54.0px;line-height:64.8px;color:#1a1a1a;transform:translate(262.90px,241.92px) scale(0.1000,.1);">薄</div>
<svg style="left:272.2px;top:224.7px" width="5" height="21.2" viewBox="0 0 5 21.2"><path d="M4.4 1 Q2.6 1 2.6 2.6 L2.6 9.0 Q2.6 10.6 0.8 10.6 Q2.6 10.6 2.6 12.2 L2.6 18.6 Q2.6 20.2 4.4 20.2" fill="none" stroke="#222" stroke-width="0.7"/></svg>
<div class="t m" style="font-size:53.0px;line-height:63.6px;color:#1a1a1a;transform:translate(276.90px,225.01px) scale(0.1000,.1);width:259px;text-align:justify;text-align-last:justify;">单<span class="bl" style="font-weight:bold">薄</span>(<span class="rd" style="font-weight:bold;font-size:.86em">bó</span>&nbsp;)</div>
<div class="t m" style="font-size:53.0px;line-height:63.6px;color:#1a1a1a;transform:translate(276.90px,236.01px) scale(0.1000,.1);width:259px;text-align:justify;text-align-last:justify;"><span class="bl" style="font-weight:bold">薄</span>纸(<span class="rd" style="font-weight:bold;font-size:.86em">báo</span> )</div>
<div class="t sf" style="font-size:57.0px;line-height:68.4px;color:#111;transform:translate(363.50px,164.69px) scale(0.1000,.1);width:510px;text-align:justify;text-align-last:justify;">2.给下列形似字组词</div>
<div class="t m" style="font-size:52.0px;line-height:62.4px;color:#1a1a1a;transform:translate(363.00px,198.11px) scale(0.1000,.1);">(1)</div>
<svg style="left:369.0px;top:187.3px" width="5" height="30.6" viewBox="0 0 5 30.6"><path d="M4.4 1 Q2.6 1 2.6 2.6 L2.6 13.7 Q2.6 15.3 0.8 15.3 Q2.6 15.3 2.6 16.9 L2.6 28.0 Q2.6 29.6 4.4 29.6" fill="none" stroke="#222" stroke-width="0.7"/></svg>
<div class="t m" style="font-size:53.0px;line-height:63.6px;color:#1a1a1a;transform:translate(372.90px,188.01px) scale(0.1000,.1);"><b>翼</b>(<span class="rd">羽翼</span>)</div>
<div class="t m" style="font-size:53.0px;line-height:63.6px;color:#1a1a1a;transform:translate(372.90px,198.01px) scale(0.1000,.1);"><b>冀</b>(<span class="rd">希冀</span>)</div>
<div class="t m" style="font-size:53.0px;line-height:63.6px;color:#1a1a1a;transform:translate(372.90px,208.01px) scale(0.1000,.1);"><b>骥</b>(<span class="rd">骐骥</span>)</div>
<div class="t m" style="font-size:52.0px;line-height:62.4px;color:#1a1a1a;transform:translate(363.00px,238.11px) scale(0.1000,.1);">(2)</div>
<svg style="left:369.0px;top:225.1px" width="5" height="28.1" viewBox="0 0 5 28.1"><path d="M4.4 1 Q2.6 1 2.6 2.6 L2.6 12.4 Q2.6 14.0 0.8 14.0 Q2.6 14.0 2.6 15.6 L2.6 25.5 Q2.6 27.1 4.4 27.1" fill="none" stroke="#222" stroke-width="0.7"/></svg>
<div class="t m" style="font-size:53.0px;line-height:63.6px;color:#1a1a1a;transform:translate(372.90px,225.01px) scale(0.1000,.1);"><b>黯</b>(<span class="rd">黯然</span>)</div>
<div class="t m" style="font-size:53.0px;line-height:63.6px;color:#1a1a1a;transform:translate(372.90px,236.01px) scale(0.1000,.1);"><b>谙</b>(<span class="rd">谙熟</span>)</div>
<div class="t m" style="font-size:53.0px;line-height:63.6px;color:#1a1a1a;transform:translate(372.90px,246.01px) scale(0.1000,.1);"><b>喑</b>(<span class="rd">万马齐喑</span>)</div>
<div class="t m" style="font-size:52.0px;line-height:62.4px;color:#1a1a1a;transform:translate(438.60px,198.11px) scale(0.1000,.1);">(3)</div>
<svg style="left:445.4px;top:187.3px" width="5" height="30.6" viewBox="0 0 5 30.6"><path d="M4.4 1 Q2.6 1 2.6 2.6 L2.6 13.7 Q2.6 15.3 0.8 15.3 Q2.6 15.3 2.6 16.9 L2.6 28.0 Q2.6 29.6 4.4 29.6" fill="none" stroke="#222" stroke-width="0.7"/></svg>
<div class="t m" style="font-size:53.0px;line-height:63.6px;color:#1a1a1a;transform:translate(449.30px,188.01px) scale(0.1000,.1);"><b>悴</b>(<span class="rd">憔悴</span>)</div>
<div class="t m" style="font-size:53.0px;line-height:63.6px;color:#1a1a1a;transform:translate(449.30px,198.01px) scale(0.1000,.1);"><b>猝</b>(<span class="rd">猝止</span>)</div>
<div class="t m" style="font-size:53.0px;line-height:63.6px;color:#1a1a1a;transform:translate(449.30px,208.01px) scale(0.1000,.1);"><b>淬</b>(<span class="rd">淬火</span>)</div>
<div class="t m" style="font-size:52.0px;line-height:62.4px;color:#1a1a1a;transform:translate(438.60px,240.11px) scale(0.1000,.1);">(4)</div>
<svg style="left:445.4px;top:227.4px" width="5" height="28.2" viewBox="0 0 5 28.2"><path d="M4.4 1 Q2.6 1 2.6 2.6 L2.6 12.5 Q2.6 14.1 0.8 14.1 Q2.6 14.1 2.6 15.7 L2.6 25.6 Q2.6 27.2 4.4 27.2" fill="none" stroke="#222" stroke-width="0.7"/></svg>
<div class="t m" style="font-size:53.0px;line-height:63.6px;color:#1a1a1a;transform:translate(449.30px,228.01px) scale(0.1000,.1);"><b>喋</b>(<span class="rd">喋血</span>)</div>
<div class="t m" style="font-size:53.0px;line-height:63.6px;color:#1a1a1a;transform:translate(449.30px,238.01px) scale(0.1000,.1);"><b>牒</b>(<span class="rd">通牒</span>)</div>
<div class="t m" style="font-size:53.0px;line-height:63.6px;color:#1a1a1a;transform:translate(449.30px,248.01px) scale(0.1000,.1);"><b>谍</b>(<span class="rd">谍报</span>)</div>
<div class="t b" style="font-size:55.0px;line-height:66.0px;color:#1414ee;transform:translate(535.80px,161.82px) scale(0.1000,.1);">二、词语积累</div>
<div class="r" style="left:536.8px;top:176.4px;width:24.0px;height:8.6px;background:#e27c22;border-radius:0.5px;box-shadow:0 0 0 0.4px #f0a860;"></div>
<div class="t b" style="font-size:46.0px;line-height:55.2px;color:#fff;transform:translate(538.60px,177.68px) scale(0.1000,.1);width:210px;text-align:justify;text-align-last:justify;">理解运用</div>
<div class="t " style="font-size:54.0px;line-height:64.8px;color:#262626;transform:translate(537.80px,193.92px) scale(0.1000,.1);">(1)赓续:</div>
<div class="t " style="font-size:49.0px;line-height:58.8px;color:#d01414;transform:translate(558.70px,191.39px) scale(0.1000,.1);">赓 赓 连 续 会。</div>
<div class="r" style="left:558.7px;top:198.9px;width:41.0px;height:0.6px;background:#3a3a3a;"></div>
<div class="t " style="font-size:54.0px;line-height:64.8px;color:#262626;transform:translate(537.80px,206.92px) scale(0.1000,.1);">(2)踌躇:</div>
<div class="t " style="font-size:49.0px;line-height:58.8px;color:#d01414;transform:translate(558.70px,203.39px) scale(0.1000,.1);width:690px;text-align:justify;text-align-last:justify;">形容生情强隐。靠。不抓从。</div>
<div class="r" style="left:558.7px;top:212.4px;width:80.8px;height:0.6px;background:#3a3a3a;"></div>
<div class="t " style="font-size:54.0px;line-height:64.8px;color:#262626;transform:translate(537.80px,219.92px) scale(0.1000,.1);">(3)黯然:</div>
<div class="t " style="font-size:49.0px;line-height:58.8px;color:#d01414;transform:translate(558.70px,217.39px) scale(0.1000,.1);width:304px;text-align:justify;text-align-last:justify;">忧伤的样子。</div>
<div class="r" style="left:558.7px;top:225.9px;width:36.0px;height:0.6px;background:#3a3a3a;"></div>
<div class="t " style="font-size:49.0px;line-height:58.8px;color:#d01414;transform:translate(558.70px,226.39px) scale(0.1000,.1);">屠杀。</div>
<div class="t " style="font-size:54.0px;line-height:64.8px;color:#262626;transform:translate(537.80px,233.92px) scale(0.1000,.1);">(4)屠戮:</div>
<div class="r" style="left:558.7px;top:238.7px;width:10.1px;height:0.6px;background:#3a3a3a;"></div>
<div class="t " style="font-size:49.0px;line-height:58.8px;color:#d01414;transform:translate(568.00px,239.39px) scale(0.1000,.1);width:1100px;text-align:justify;text-align-last:justify;">牺牲生命也在所不惜。殒。死亡。恤。顾虑。</div>
<div class="t " style="font-size:54.0px;line-height:64.8px;color:#262626;transform:translate(537.80px,247.92px) scale(0.1000,.1);">(5)殒身不恤:</div>
<div class="r" style="left:572.0px;top:252.8px;width:114.6px;height:0.6px;background:#3a3a3a;"></div>
<div class="t " style="font-size:54.0px;line-height:64.8px;color:#262626;transform:translate(9.40px,308.92px) scale(0.1000,.1);">(6)长歌当哭:</div>
<div class="t " style="font-size:49.0px;line-height:58.8px;color:#d01414;transform:translate(47.00px,308.39px) scale(0.1000,.1);width:1110px;text-align:justify;text-align-last:justify;">用写文章来代替哭泣。长歌。引吭高歌。这</div>
<div class="t " style="font-size:49.0px;line-height:58.8px;color:#d01414;transform:translate(9.40px,317.39px) scale(0.1000,.1);width:546px;text-align:justify;text-align-last:justify;">里指写文章。当。当做。</div>
<div class="r" style="left:9.4px;top:323.7px;width:137.1px;height:0.6px;background:#3a3a3a;"></div>
<div class="t " style="font-size:49.0px;line-height:58.8px;color:#d01414;transform:translate(39.70px,330.39px) scale(0.1000,.1);width:630px;text-align:justify;text-align-last:justify;">形容使人感受很深。耀出</div>
<div class="r" style="left:10.0px;top:334.5px;width:70.8px;height:0.6px;background:#3a3a3a;"></div>
<div class="t " style="font-size:54.0px;line-height:64.8px;color:#262626;transform:translate(9.40px,337.92px) scale(0.1000,.1);">(7)痛心怆魄:</div>
<div class="t " style="font-size:49.0px;line-height:58.8px;color:#d01414;transform:translate(39.70px,339.39px) scale(0.1000,.1);">魂大。</div>
<div class="r" style="left:39.7px;top:343.5px;width:88.3px;height:0.6px;background:#3a3a3a;"></div>
<div class="r" style="left:182.2px;top:299.2px;width:24.4px;height:9px;background:linear-gradient(90deg,#119ad4 0,#119ad4 22%,#34c0ee 23%,#22b0e6 100%);clip-path:polygon(0 50%,9% 0,96% 0,100% 12%,100% 88%,96% 100%,9% 100%);"></div>
<div class="t b" style="font-size:44.0px;line-height:52.8px;color:#fff;transform:translate(188.00px,300.87px) scale(0.1000,.1);">知点小结</div>
<div class="t " style="font-size:49.0px;line-height:58.8px;color:#262626;transform:translate(184.40px,311.39px) scale(0.1000,.1);width:1573px;text-align:justify;text-align-last:justify;">判断下列加颜色成语的运用是否正确。(正确的打“√”，错误的</div>
<div class="t m" style="font-size:48.0px;line-height:57.6px;color:#1a1a1a;transform:translate(184.40px,320.49px) scale(0.1000,.1);">打“×”)</div>
<div class="t " style="font-size:49.0px;line-height:58.8px;color:#262626;transform:translate(184.40px,331.39px) scale(0.1000,.1);width:1573px;text-align:justify;text-align-last:justify;">(1)刘欢演唱的纪录片《伟大的抗美援朝》主题曲《英雄赞歌》真是</div>
<div class="t " style="font-size:49.0px;line-height:58.8px;color:#262626;transform:translate(184.40px,340.39px) scale(0.1000,.1);width:1100px;text-align:justify;text-align-last:justify;"><span class="bl">长歌当哭</span>，如泣如诉，让人潸然泪下。(&nbsp;&nbsp;&nbsp;&nbsp;&nbsp; )</div>
<div class="t b" style="font-size:64.0px;line-height:76.8px;color:#d81818;transform:translate(256.20px,345.97px) scale(0.1000,.1);">×</div>
<div class="t " style="font-size:49.0px;line-height:58.8px;color:#d01414;transform:translate(282.70px,346.39px) scale(0.1000,.1);width:533px;text-align:justify;text-align-last:justify;">“长歌当哭”是指用写</div>
<div class="t " style="font-size:49.0px;line-height:58.8px;color:#d01414;transform:translate(184.40px,355.39px) scale(0.1000,.1);width:1573px;text-align:justify;text-align-last:justify;">文章来代替哭泣，表指用读文抒发胸中的悲愤，这个句子把歌</div>
<div class="t " style="font-size:49.0px;line-height:58.8px;color:#262626;transform:translate(184.40px,361.39px) scale(0.1000,.1);width:1573px;text-align:justify;text-align-last:justify;">(2)抗疫早期的逆行者要有<span class="bl">殒身不恤</span>的精神，领导者和组织者</div>
<div class="t m" style="font-size:48.0px;line-height:57.6px;color:#d01414;transform:translate(184.40px,364.49px) scale(0.1000,.1);">当做哭泣，不合</div>
<div class="t " style="font-size:49.0px;line-height:58.8px;color:#262626;transform:translate(184.40px,371.39px) scale(0.1000,.1);width:980px;text-align:justify;text-align-last:justify;">也要尽全力保障他们的生命安全。(&nbsp;&nbsp;&nbsp;&nbsp;&nbsp; )</div>
<div class="t " style="font-size:49.0px;line-height:58.8px;color:#262626;transform:translate(184.40px,381.39px) scale(0.1000,.1);width:1573px;text-align:justify;text-align-last:justify;">(3)一向<span class="bl">踌躇不前</span>的刘思佳竟被一个刚来的姑娘管得服服帖帖，太</div>
<div class="t m" style="font-size:48.0px;line-height:57.6px;color:#1a1a1a;transform:translate(184.40px,391.49px) scale(0.1000,.1);">窝囊了！(&nbsp;&nbsp;&nbsp;&nbsp;&nbsp; )</div>
<div class="t b" style="font-size:56.0px;line-height:67.2px;color:#e02020;transform:translate(186.80px,403.73px) scale(0.1000,.1);">√</div>
<div class="t " style="font-size:49.0px;line-height:58.8px;color:#262626;transform:translate(360.00px,310.39px) scale(0.1000,.1);width:1567px;text-align:justify;text-align-last:justify;">(4)指挥雷霆、气宇轩昂的大将军，与悉心守冰清玉洁的女神并</div>
<div class="t " style="font-size:49.0px;line-height:58.8px;color:#262626;transform:translate(360.00px,320.39px) scale(0.1000,.1);width:1567px;text-align:justify;text-align-last:justify;">肩而坐，娓娓而谈，伊的卷战场上<span class="bl">痛心怆魄</span>、奋勇杀敌的故事，</div>
<div class="t " style="font-size:49.0px;line-height:58.8px;color:#262626;transform:translate(360.00px,331.39px) scale(0.1000,.1);width:708px;text-align:justify;text-align-last:justify;">此情此景，一刻千金。(&nbsp;&nbsp;&nbsp;&nbsp;&nbsp; )</div>
<div class="t m" style="font-size:26.0px;line-height:31.2px;color:#e02020;transform:translate(380.00px,335.57px) scale(0.1000,.1);">×</div>
<div class="r" style="left:535.8px;top:299.9px;width:24.6px;height:8.3px;background:#e27c22;border-radius:0.5px;box-shadow:0 0 0 0.4px #f0a860;"></div>
<div class="t b" style="font-size:46.0px;line-height:55.2px;color:#fff;transform:translate(537.60px,300.68px) scale(0.1000,.1);width:210px;text-align:justify;text-align-last:justify;">辨词填空</div>
<div class="t " style="font-size:53.0px;line-height:63.6px;color:#222;transform:translate(536.80px,315.01px) scale(0.1000,.1);">(1)气概·气魄</div>
<div class="t " style="font-size:49.0px;line-height:58.8px;color:#262626;transform:translate(536.80px,325.39px) scale(0.1000,.1);width:1564px;text-align:justify;text-align-last:justify;">都是名词，都指有气势。气概：在对待重大问题上表现的态度、</div>
<div class="t " style="font-size:49.0px;line-height:58.8px;color:#262626;transform:translate(536.80px,335.39px) scale(0.1000,.1);width:1296px;text-align:justify;text-align-last:justify;">举动或气势(专指正直、豪迈的)。气魄：魄力，气势。</div>
<div class="t " style="font-size:49.0px;line-height:58.8px;color:#262626;transform:translate(536.80px,345.39px) scale(0.1000,.1);width:1564px;text-align:justify;text-align-last:justify;">①我目睹中国女子的办事，是始于去年的，虽然是少数，但看</div>
<div class="t " style="font-size:49.0px;line-height:58.8px;color:#262626;transform:translate(536.80px,354.39px) scale(0.1000,.1);width:1357px;text-align:justify;text-align-last:justify;">那干练坚决，百折不回的________，曾经屡次为之感叹。</div>
<div class="t b" style="font-size:43.0px;line-height:51.6px;color:#d01414;transform:translate(577.60px,358.96px) scale(0.1000,.1);">气概</div>
<div class="t " style="font-size:49.0px;line-height:58.8px;color:#262626;transform:translate(536.80px,365.39px) scale(0.1000,.1);width:1178px;text-align:justify;text-align-last:justify;">② 《听松》________豪迈，跌宕起伏，刚劲有力。</div>
<div class="t b" style="font-size:43.0px;line-height:51.6px;color:#d01414;transform:translate(564.80px,370.96px) scale(0.1000,.1);">气魄</div>
</body></html>
